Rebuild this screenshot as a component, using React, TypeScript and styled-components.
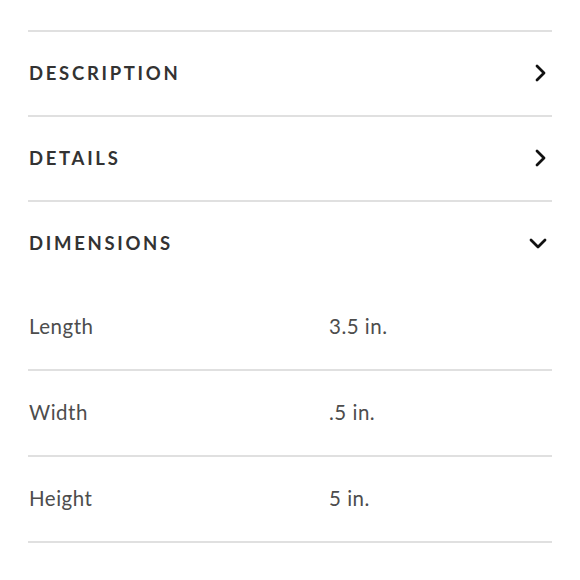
import styled, { createGlobalStyle } from "styled-components"

const Global = createGlobalStyle`
  body {
    margin: 0;
    background: #fff;
  }
`

const sections = [
  { title: "DESCRIPTION", open: false },
  { title: "DETAILS", open: false },
  { title: "DIMENSIONS", open: true },
]

const dims = [
  { label: "Length", value: "3.5 in." },
  { label: "Width", value: ".5 in." },
  { label: "Height", value: "5 in." },
]

const Chevron = ({ open }: { open: boolean }) =>
  open ? (
    <svg width="18" height="14" viewBox="0 0 18 14">
      <path d="M2 4 L9 11 L16 4" fill="none" stroke="#111" strokeWidth="2.8" strokeLinecap="round" strokeLinejoin="round" />
    </svg>
  ) : (
    <svg width="14" height="18" viewBox="0 0 14 18">
      <path d="M4 2 L11 9 L4 16" fill="none" stroke="#111" strokeWidth="2.8" strokeLinecap="round" strokeLinejoin="round" />
    </svg>
  )

const App = () => {
  return (
    <Page>
      <Global />
      <Wrap>
        {sections.map((s) => (
          <Section key={s.title}>
            <Header>
              <Title>{s.title}</Title>
              <Icon>
                <Chevron open={s.open} />
              </Icon>
            </Header>
            {s.open && (
              <Table>
                {dims.map((d) => (
                  <Row key={d.label}>
                    <Cell>{d.label}</Cell>
                    <Cell>{d.value}</Cell>
                  </Row>
                ))}
              </Table>
            )}
          </Section>
        ))}
      </Wrap>
    </Page>
  )
}
export default App

const Page = styled.div`
  width: 580px;
  height: 580px;
  background: #fff;
  overflow: hidden;
  padding-top: 30px;
  box-sizing: border-box;
`
const Wrap = styled.div`
  margin: 0 28px;
`
const Section = styled.div`
  border-top: 2px solid #e0e0e0;
`
const Header = styled.div`
  height: 83px;
  box-sizing: border-box;
  padding-bottom: 2px;
  display: flex;
  justify-content: space-between;
  align-items: center;
`
const Title = styled.div`
  font-family: Lato, "Noto Sans", sans-serif;
  font-weight: 700;
  font-size: 18.5px;
  letter-spacing: 2.7px;
  color: #333;
  margin-left: 1px;
`
const Icon = styled.div`
  display: flex;
  align-items: center;
  justify-content: center;
  margin-right: 5px;
`
const Table = styled.div`
  display: flex;
  flex-direction: column;
`
const Row = styled.div`
  height: 82px;
  padding-bottom: 2px;
  display: grid;
  grid-template-columns: 300px 1fr;
  align-items: center;
  & + & {
    border-top: 2px solid #e0e0e0;
  }
  &:last-child {
    border-bottom: 2px solid #e0e0e0;
  }
`
const Cell = styled.div`
  font-family: Lato, "Noto Sans", sans-serif;
  font-size: 20.5px;
  letter-spacing: 0.5px;
  color: #4d4d4d;
  padding-left: 1px;
`
